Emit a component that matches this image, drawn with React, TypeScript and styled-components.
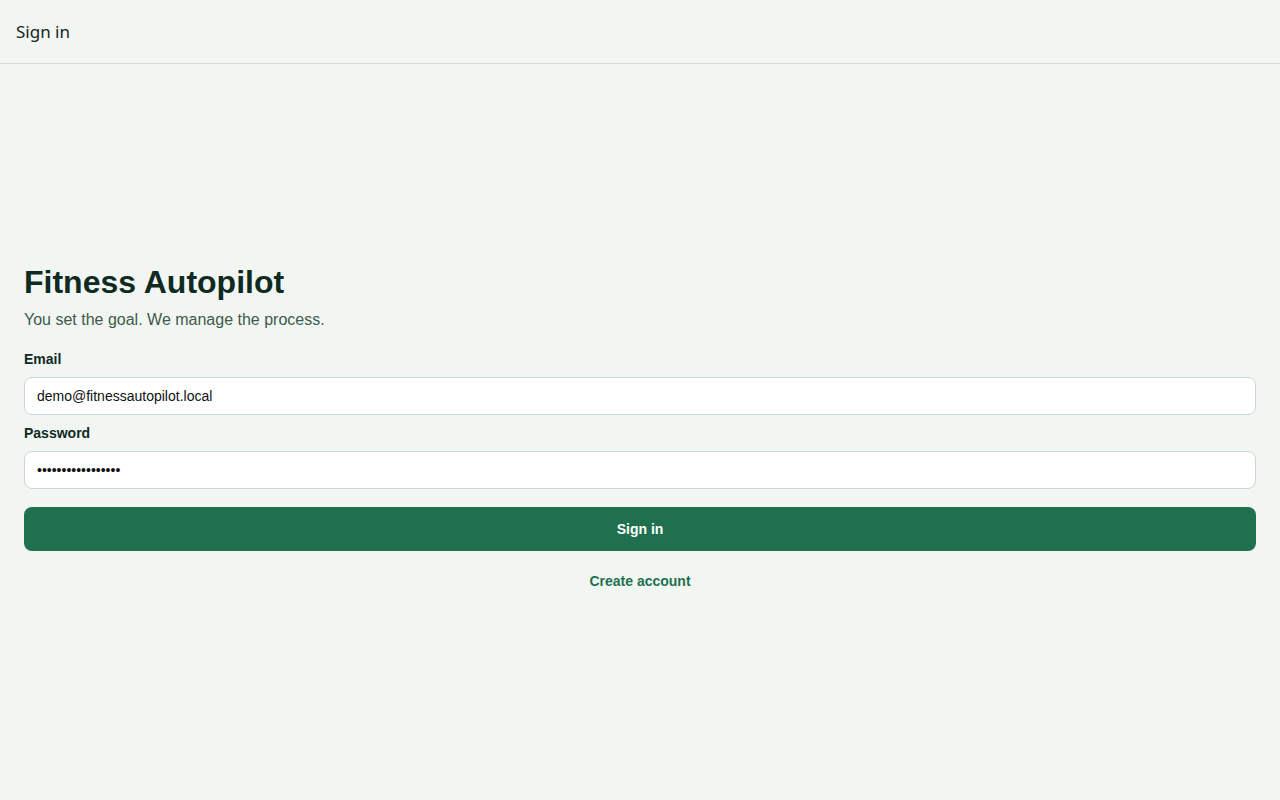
import React, { useState } from 'react'
import styled, { createGlobalStyle } from 'styled-components'

const GlobalStyle = createGlobalStyle`
  html, body {
    margin: 0;
    padding: 0;
    background: #f2f6f3;
  }
  body {
    font-family: "Liberation Sans", Arial, sans-serif;
    color: #0f2a1f;
  }
  * {
    box-sizing: border-box;
  }
`

const Page = styled.div`
  min-height: 100vh;
  display: flex;
  flex-direction: column;
`

const TopBar = styled.header`
  height: 64px;
  display: flex;
  align-items: center;
  padding: 0 16px;
  border-bottom: 1px solid #d3d9d5;
`

const TopTitle = styled.span`
  font-family: "Noto Sans", "Open Sans", sans-serif;
  font-size: 17px;
  color: #16241d;
`

const Main = styled.main`
  flex: 1;
  display: flex;
  flex-direction: column;
  justify-content: center;
  padding: 0 24px 10px;
`

const Title = styled.h1`
  margin: 0;
  font-size: 32px;
  line-height: 38px;
  font-weight: 700;
  color: #0f2a1f;
`

const Tagline = styled.p`
  margin: 7px 0 16px;
  font-size: 16px;
  line-height: 24px;
  color: #3f5a4c;
`

const Form = styled.form`
  display: flex;
  flex-direction: column;
`

const Field = styled.label`
  display: flex;
  flex-direction: column;
  gap: 8px;
  margin-bottom: 7px;
`

const FieldLabel = styled.span`
  padding-top: 1px;
  font-size: 14px;
  line-height: 20px;
  font-weight: 700;
  color: #0f2a1f;
`

const Input = styled.input`
  height: 38px;
  width: 100%;
  padding: 0 12px;
  border: 1px solid #cdd6d0;
  border-radius: 8px;
  background: #ffffff;
  font-family: "Liberation Sans", Arial, sans-serif;
  font-size: 14px;
  color: #111;
  outline: none;
`

const SubmitButton = styled.button`
  margin-top: 11px;
  height: 44px;
  width: 100%;
  border: none;
  border-radius: 8px;
  background: #1f704e;
  color: #ffffff;
  font-family: "Liberation Sans", Arial, sans-serif;
  font-size: 14px;
  font-weight: 700;
  cursor: pointer;
`

const LinkRow = styled.div`
  margin-top: 20px;
  text-align: center;
`

const TextLink = styled.a`
  font-size: 14px;
  line-height: 20px;
  font-weight: 700;
  color: #1f704e;
  text-decoration: none;
  cursor: pointer;
`

export default function App() {
  const [email, setEmail] = useState('demo@fitnessautopilot.local')
  const [password, setPassword] = useState('demo-password-001')

  return (
    <Page>
      <GlobalStyle />
      <TopBar>
        <TopTitle>Sign in</TopTitle>
      </TopBar>
      <Main>
        <Title>Fitness Autopilot</Title>
        <Tagline>You set the goal. We manage the process.</Tagline>
        <Form onSubmit={(e) => e.preventDefault()}>
          <Field>
            <FieldLabel>Email</FieldLabel>
            <Input type="email" value={email} onChange={(e) => setEmail(e.target.value)} />
          </Field>
          <Field>
            <FieldLabel>Password</FieldLabel>
            <Input type="password" value={password} onChange={(e) => setPassword(e.target.value)} />
          </Field>
          <SubmitButton type="submit">Sign in</SubmitButton>
        </Form>
        <LinkRow>
          <TextLink>Create account</TextLink>
        </LinkRow>
      </Main>
    </Page>
  )
}
